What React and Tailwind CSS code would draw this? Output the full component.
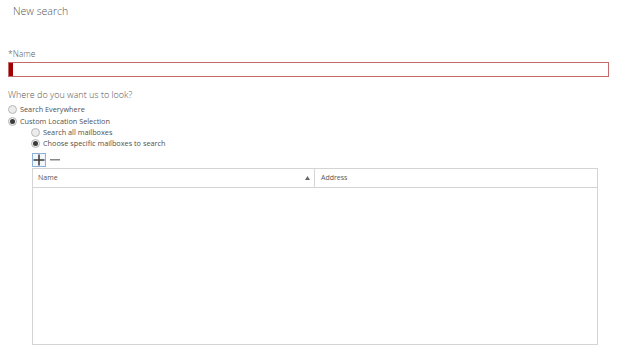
import React from "react";

function Radio({ checked, label, h }) {
  return (
    <div className={"flex items-center " + (h === 13 ? "h-[13px]" : "h-[11px]")}>
      <span className="w-[9px] h-[9px] rounded-full border border-[#b8b8b8] bg-[#ececec] flex items-center justify-center shrink-0">
        {checked && <span className="w-[5px] h-[5px] rounded-full bg-[#3a3a3a]" />}
      </span>
      <span className="ml-[3px] text-[7.3px] text-[#505050] leading-none">{label}</span>
    </div>
  );
}

export default function App() {
  return (
    <div
      className="w-[627px] h-[355px] bg-white overflow-hidden flex flex-col"
      style={{ fontFamily: '"Open Sans", "Noto Sans", sans-serif' }}
    >
      <div className="pl-[13px] pt-[4px] text-[10.5px] font-light text-[#555] leading-[14px]">New search</div>
      <div className="pl-[8px] mt-[30px] text-[8.5px] font-light text-[#555] leading-[12px]">*Name</div>
      <div className="ml-[8px] mt-[2px] w-[601px] h-[15px] border border-[#c46a6c] flex">
        <div className="w-[4px] h-full bg-[#a00000]" />
      </div>
      <div className="pl-[8px] mt-[12px] text-[9px] font-light text-[#555] leading-[12px]">Where do you want us to look?</div>
      <div className="pl-[8px] mt-[2px] flex flex-col">
        <Radio h={13} label="Search Everywhere" />
        <Radio h={11} checked label="Custom Location Selection" />
        <div className="pl-[23px] flex flex-col">
          <Radio h={11} label="Search all mailboxes" />
          <Radio h={11} checked label="Choose specific mailboxes to search" />
        </div>
      </div>
      <div className="ml-[32px] mt-[4px] flex items-center gap-[4px]">
        <div className="w-[14px] h-[14px] border border-[#8fb0d8] flex items-center justify-center bg-[#f3f7fc]">
          <svg width="12" height="12" viewBox="0 0 12 12">
            <rect x="5.25" y="0.5" width="1.5" height="11" fill="#3a3a3a" />
            <rect x="0.5" y="5.25" width="11" height="1.5" fill="#3a3a3a" />
          </svg>
        </div>
        <svg width="11" height="12" viewBox="0 0 11 12">
          <rect x="0" y="5" width="10" height="1.5" fill="#888" />
        </svg>
      </div>
      <div className="ml-[32px] mt-[1px] w-[566px] h-[177px] border border-[#d4d4d4] flex flex-col">
        <div className="h-[19px] border-b border-[#d4d4d4] flex text-[7px] text-[#555]">
          <div className="w-[282px] border-r border-[#d4d4d4] flex items-center pl-[5px] pr-[4px]">
            <span className="flex-1">Name</span>
            <svg width="5" height="4" viewBox="0 0 5 4">
              <polygon points="2.5,0 5,4 0,4" fill="#666" />
            </svg>
          </div>
          <div className="flex-1 flex items-center pl-[6px]">Address</div>
        </div>
        <div className="flex-1" />
      </div>
    </div>
  );
}
